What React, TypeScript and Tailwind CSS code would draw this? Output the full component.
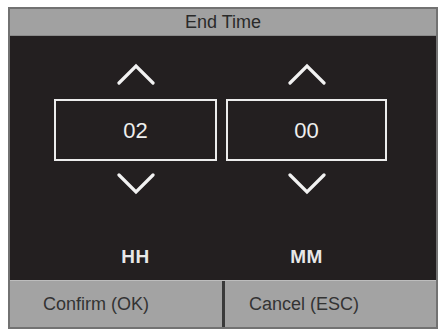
import React from "react";

const Up = () => (
  <svg width="38" height="22" viewBox="0 0 38 22" fill="none">
    <path d="M2 20 L19 3 L36 20" stroke="#f2f2f2" strokeWidth="3.2" strokeLinecap="round" strokeLinejoin="miter" />
  </svg>
);
const Down = () => (
  <svg width="38" height="22" viewBox="0 0 38 22" fill="none">
    <path d="M2 2 L19 19 L36 2" stroke="#f2f2f2" strokeWidth="3.2" strokeLinecap="round" strokeLinejoin="miter" />
  </svg>
);

function Col({ value, label, w }: { value: string; label: string; w: string }) {
  return (
    <div className={`flex flex-col items-center ${w}`}>
      <div className="mt-[27px] h-[22px] flex items-center justify-center"><Up /></div>
      <div className="mt-[14px] h-[62px] w-full border-2 border-[#ececec] flex items-center justify-center text-[22px] text-[#eeeeee]">
        {value}
      </div>
      <div className="mt-[12px] h-[22px] flex items-center justify-center"><Down /></div>
      <div className="mt-[52px] h-[20px] leading-[20px] text-[19px] font-bold text-[#e8e8e8] tracking-[0.5px]">{label}</div>
    </div>
  );
}

export default function App() {
  return (
    <div className="w-[442px] h-[331px] bg-white pl-[8px] pt-[7px]" style={{ fontFamily: '"Liberation Sans", Arial, sans-serif' }}>
      <div className="w-[430px] h-[322px] border-2 border-[#727272] flex flex-col bg-[#231f20]">
        <div className="h-[27px] bg-[#a1a1a1] border-b border-[#8a8a8a] flex items-center justify-center text-[18px] text-[#2a2a2a]">
          End Time
        </div>
        <div className="flex-1 flex pl-[44px] gap-[9px]">
          <Col value="02" label="HH" w="w-[163px]" />
          <Col value="00" label="MM" w="w-[161px]" />
        </div>
        <div className="h-[47px] flex bg-[#a3a3a3] border-t border-[#bdbdbd] text-[18px] text-[#333333]">
          <div className="w-[212px] flex items-center pl-[33px]">Confirm (OK)</div>
          <div className="w-[3px] bg-[#3a3a3a]" />
          <div className="flex-1 flex items-center pl-[24px]">Cancel (ESC)</div>
        </div>
      </div>
    </div>
  );
}
